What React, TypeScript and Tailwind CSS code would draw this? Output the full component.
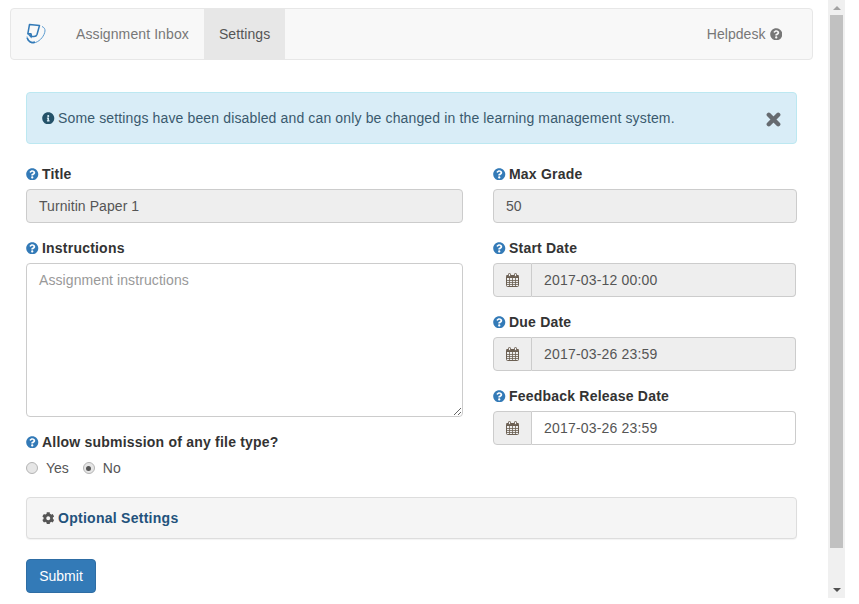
import React from "react";
import { FaQuestionCircle, FaInfoCircle, FaCog } from "react-icons/fa";

function Calendar() {
  return (
    <svg width="13" height="14" viewBox="0 0 13 14" className="text-[#6b5f52]" fill="none" stroke="currentColor">
      <rect x="0.5" y="2.5" width="12" height="11" rx="1" />
      <rect x="0.5" y="2" width="12" height="3" fill="currentColor" stroke="none" />
      <path d="M0.5 7.5H12.5M0.5 9.5H12.5M0.5 11.5H12.5M3.5 5V13.5M6.5 5V13.5M9.5 5V13.5" strokeWidth="0.8" />
      <rect x="2.5" y="0.5" width="2" height="3" rx="0.8" fill="#eee" />
      <rect x="8.5" y="0.5" width="2" height="3" rx="0.8" fill="#eee" />
    </svg>
  );
}

function Label({ text }: { text: string }) {
  return (
    <div className="flex items-center h-5 mb-[5px] font-bold text-[14px] text-[#333] tracking-[0.21px]">
      <FaQuestionCircle className="text-[#337ab7] w-[12.5px] h-[12.5px] mr-[3.5px] shrink-0" />
      <span>{text}</span>
    </div>
  );
}

function DateField({ label, value, disabled, last }: { label: string; value: string; disabled?: boolean; last?: boolean }) {
  return (
    <div className={last ? "" : "mb-[15px]"}>
      <Label text={label} />
      <div className="flex h-[34px] w-[303px]">
        <div className="w-[39px] flex items-center justify-center bg-[#eee] border border-[#ccc] rounded-l">
          <Calendar />
        </div>
        <div
          className={`flex-1 flex items-center pl-3 border border-l-0 border-[#ccc] rounded-r text-[14px] text-[#555] tracking-[0.19px] ${disabled ? "bg-[#eee]" : "bg-white"}`}
        >
          {value}
        </div>
      </div>
    </div>
  );
}

function Radio({ checked }: { checked?: boolean }) {
  return (
    <span className="w-3 h-3 rounded-full border border-[#b4b4b4] bg-[#e6e6e6] flex items-center justify-center shrink-0">
      {checked && <span className="w-[5px] h-[5px] rounded-full bg-[#555]" />}
    </span>
  );
}

function Scrollbar() {
  return (
    <div className="w-[17px] h-[598px] bg-[#f0f0f0] flex flex-col items-center shrink-0">
      <div className="h-[15px] flex items-center justify-center">
        <div className="w-0 h-0 border-x-[4px] border-x-transparent border-b-[4px] border-b-[#a3a3a3]" />
      </div>
      <div className="w-[13px] h-[533px] bg-[#c1c1c1]" />
      <div className="flex-1" />
      <div className="h-[17px] flex items-center justify-center">
        <div className="w-0 h-0 border-x-[4px] border-x-transparent border-t-[4px] border-t-[#505050]" />
      </div>
    </div>
  );
}

export default function App() {
  return (
    <div className="flex w-[859px] h-[604px] overflow-hidden bg-white font-['Liberation_Sans',Arial,sans-serif] text-[14px] leading-5 text-[#333]">
      <div className="w-[828px] shrink-0 pt-2 px-[10px]">
        <nav className="flex h-[52px] w-[803px] items-stretch justify-between bg-[#f8f8f8] border border-[#e7e7e7] rounded text-[#777]">
          <div className="flex items-stretch">
            <div className="w-[50px] flex items-center pl-[15px]">
              <svg width="21" height="22" viewBox="0 0 21 22" fill="none">
                <path d="M3.5 1.5L13.5 2.5L11 11.5C10.5 13 9.5 13.5 8 13.5H5.5L5 10.8H1.8L3.5 1.5Z" stroke="#337ab7" strokeWidth="1.5" strokeLinejoin="round" />
                <path d="M1.5 11L5.5 15.5L5.8 11.5Z" fill="#337ab7" />
                <path d="M1 13.5C1.2 18.5 5 21 9.5 19.5C14.5 17.8 18.5 12.5 19 8C19.2 6 18 4.2 16 3.5" stroke="#5b9bd0" strokeWidth="1" />
                <path d="M1.2 15C2.5 19 6 20.3 9 19" stroke="#337ab7" strokeWidth="1.6" />
              </svg>
            </div>
            <a className="flex items-center px-[15px] tracking-[0.1px]">Assignment Inbox</a>
            <a className="flex items-center px-[15px] bg-[#e7e7e7] text-[#555] tracking-[0.1px]">Settings</a>
          </div>
          <a className="flex items-center pr-[30px] tracking-[0.05px]">
            Helpdesk
            <FaQuestionCircle className="w-[12.5px] h-[12.5px] ml-1 text-[#777]" />
          </a>
        </nav>

        <main className="w-[771px] ml-4 mt-8">
          <div className="flex h-[52px] items-center justify-between mb-5 pl-[15px] pr-[15px] bg-[#d9edf7] border border-[#bce8f1] rounded text-[#31708f]">
            <div className="flex items-center">
              <FaInfoCircle className="w-[12.5px] h-[12.5px] mr-[3.5px] text-[#245269]" />
              <span className="text-[#3a5a6e] tracking-[0.14px]">Some settings have been disabled and can only be changed in the learning management system.</span>
            </div>
            <svg width="15" height="15" viewBox="0 0 15 15" className="text-[#666b70] mt-[2px]">
              <path d="M2.8 2.8L12.2 12.2M12.2 2.8L2.8 12.2" stroke="currentColor" strokeWidth="4.4" strokeLinecap="round" />
            </svg>
          </div>

          <div className="flex gap-[30px] h-[314px]">
            <div className="w-[437px]">
              <div className="mb-[15px]">
                <Label text="Title" />
                <div className="h-[34px] flex items-center px-3 bg-[#eee] border border-[#ccc] rounded text-[#555] tracking-[0.07px]">Turnitin Paper 1</div>
              </div>
              <div className="mb-[15px]">
                <Label text="Instructions" />
                <textarea
                  placeholder="Assignment instructions"
                  className="block w-full h-[154px] px-3 py-[6px] border border-[#ccc] rounded bg-white text-[14px] tracking-[0.09px] placeholder:text-[#999] outline-none"
                />
              </div>
              <Label text="Allow submission of any file type?" />
              <div className="flex items-center h-5 mt-[6px]">
                <Radio />
                <span className="ml-2 text-[#555]">Yes</span>
                <span className="ml-[14px]"><Radio checked /></span>
                <span className="ml-2 text-[#555]">No</span>
              </div>
            </div>
            <div className="w-[304px]">
              <div className="mb-[15px]">
                <Label text="Max Grade" />
                <div className="h-[34px] flex items-center px-3 bg-[#eee] border border-[#ccc] rounded text-[#555]">50</div>
              </div>
              <DateField label="Start Date" value="2017-03-12 00:00" disabled />
              <DateField label="Due Date" value="2017-03-26 23:59" disabled />
              <DateField label="Feedback Release Date" value="2017-03-26 23:59" last />
            </div>
          </div>

          <div className="flex items-center h-[42px] mt-[19px] px-[15px] bg-[#f5f5f5] border border-[#ddd] rounded shadow-[0_1px_1px_rgba(0,0,0,0.05)]">
            <FaCog className="w-[12.5px] h-[12.5px] mr-[3.5px] text-[#555]" />
            <span className="font-bold text-[#23527c] tracking-[0.27px]">Optional Settings</span>
          </div>

          <button className="block mt-5 w-[70px] h-[34px] bg-[#337ab7] border border-[#2e6da4] rounded text-white text-[14px]">Submit</button>
        </main>
      </div>
      <Scrollbar />
    </div>
  );
}
